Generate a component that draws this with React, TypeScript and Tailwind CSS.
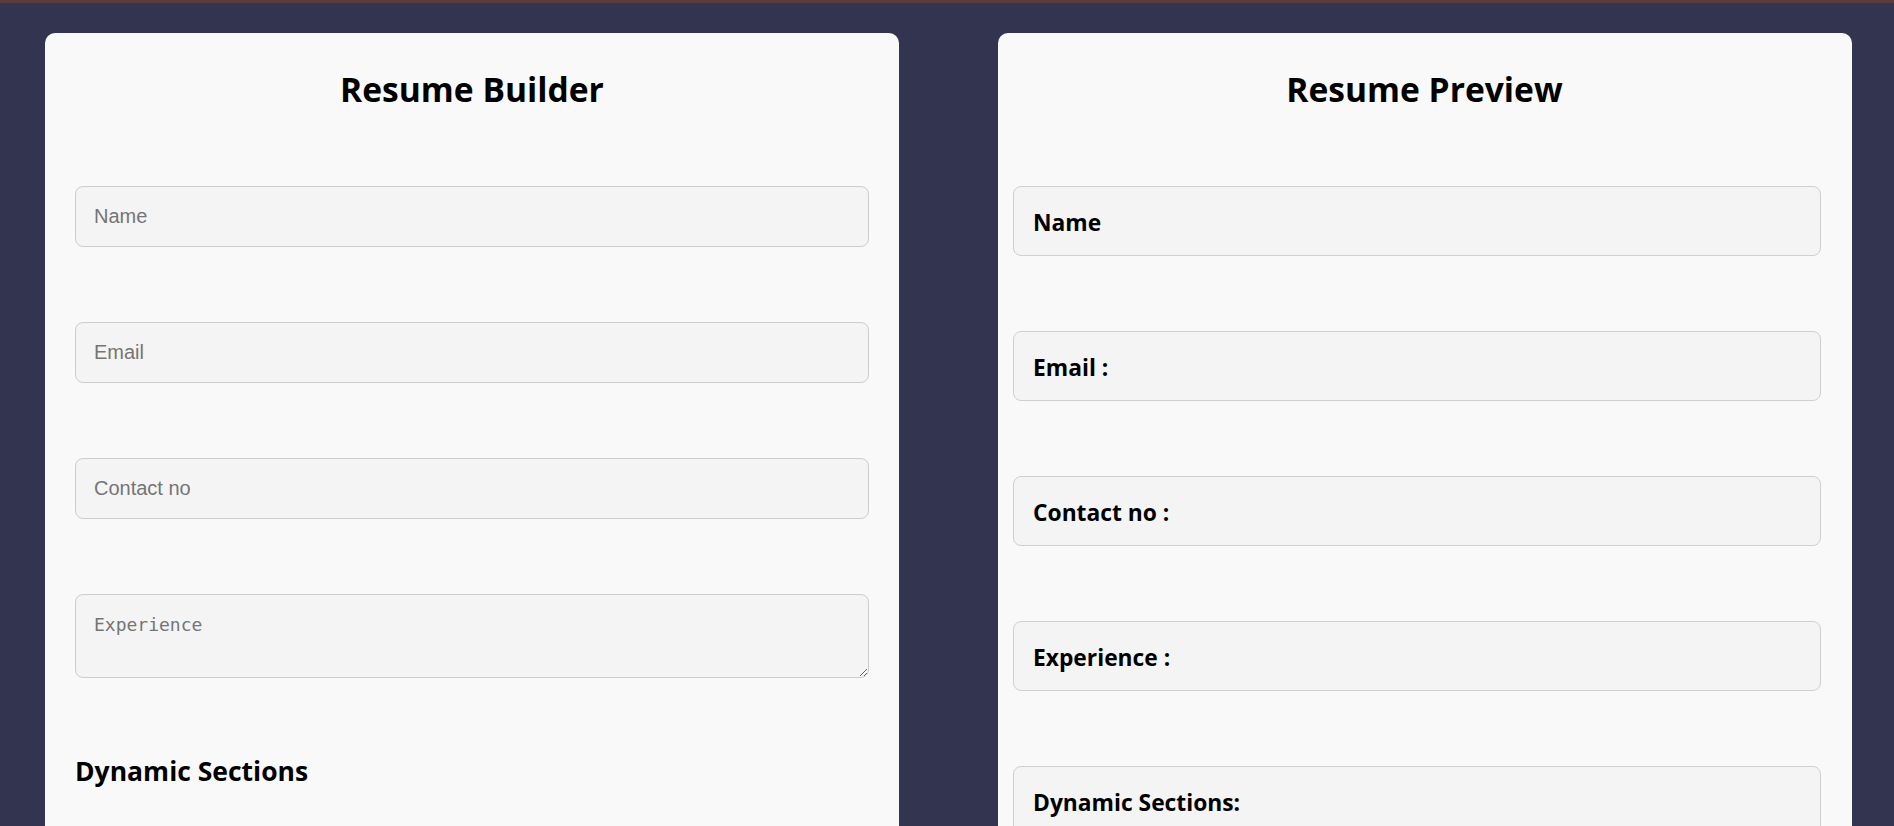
import React from "react";

const heading = { fontFamily: '"Open Sans", "Noto Sans", sans-serif' };

function PreviewBox({ label }: { label: string }) {
  return (
    <div
      className="flex h-[70px] w-[808px] items-center rounded-[8px] border border-[#cfcfcf] bg-[#f4f4f4] pl-[19px] pt-[4px]"
      style={heading}
    >
      <span className="text-[22.8px] font-bold leading-[32px] text-black">{label}</span>
    </div>
  );
}

export default function App() {
  return (
    <div className="h-[826px] w-full overflow-hidden bg-[#333450]">
      <div className="h-[3px] w-full bg-[#5a3b3e]" />
      <div className="flex gap-[99px] pl-[45px] pt-[30px]">
        {/* Builder card */}
        <div className="flex h-[900px] w-[854px] flex-col rounded-[10px] bg-[#f9f9f9] px-[30px] pt-[36px]">
          <h1
            className="text-center text-[33.6px] font-bold leading-[40px] text-black"
            style={heading}
          >
            Resume Builder
          </h1>
          <div className="mt-[77px] flex flex-col gap-[75px]">
            {["Name", "Email", "Contact no"].map((p) => (
              <input
                key={p}
                placeholder={p}
                className="h-[61px] w-full rounded-[8px] border border-[#cccccc] bg-[#f4f4f4] px-[18px] text-[20px] text-black outline-none placeholder:text-[#757575]"
                style={{ fontFamily: '"Liberation Sans", Arial, sans-serif' }}
              />
            ))}
            <textarea
              placeholder="Experience"
              className="h-[84px] w-full rounded-[8px] border border-[#cccccc] bg-[#f4f4f4] px-[18px] pb-[18px] pt-[18px] text-[18px] leading-[23px] text-black outline-none placeholder:text-[#757575]"
              style={{ fontFamily: '"DejaVu Sans Mono", "Liberation Mono", monospace' }}
            />
          </div>
          <h2
            className="mt-[75px] text-[26.5px] font-bold leading-[36px] text-black"
            style={heading}
          >
            Dynamic Sections
          </h2>
        </div>

        {/* Preview card */}
        <div className="flex h-[900px] w-[854px] flex-col rounded-[10px] bg-[#f9f9f9] pl-[15px] pr-[31px] pt-[36px]">
          <h1
            className="pl-[15px] text-center text-[33.6px] font-bold leading-[40px] text-black"
            style={heading}
          >
            Resume Preview
          </h1>
          <div className="mt-[77px] flex flex-col gap-[75px]">
            <PreviewBox label="Name" />
            <PreviewBox label="Email :" />
            <PreviewBox label="Contact no :" />
            <PreviewBox label="Experience :" />
            <PreviewBox label="Dynamic Sections:" />
          </div>
        </div>
      </div>
    </div>
  );
}
